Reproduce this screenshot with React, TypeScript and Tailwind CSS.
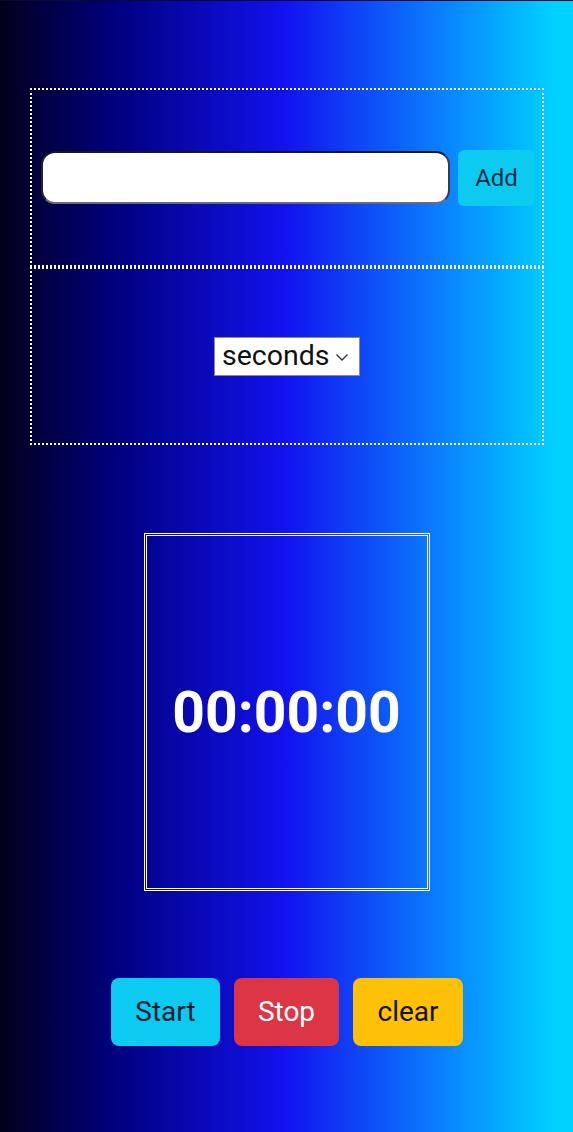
import React from "react";

export default function App() {
  return (
    <div
      className="min-h-[1132px] w-full bg-[linear-gradient(to_right,#02001c_0%,#00007e_20%,#1212f0_50%,#0a84ff_78%,#00d2ff_97%)] border-t border-[#0a0a30]"
      style={{ fontFamily: "Roboto, 'Noto Sans', sans-serif" }}
    >
      <div className="pt-[87px] pl-[30px] pr-[29px]">
        <div className="border-[2px] border-dotted border-white h-[179px] flex items-center gap-[8px] pl-[9px] pr-[7px]">
          <div className="h-[53px] flex-1 rounded-[14px] bg-white border-[2px] border-t-[#15152a] border-l-[#20203a] border-b-[#6a6a80] border-r-[#3a3a55]" />
          <button className="h-[56px] w-[77px] rounded-[6px] bg-[#0dcaf0] text-[#10304a] text-[24px]">
            Add
          </button>
        </div>
        <div className="border-[2px] border-dotted border-white h-[178px] flex items-center justify-center">
          <div className="h-[39px] w-[146px] bg-white border border-[#8a8a8a] flex items-center pl-[7px] gap-[5px]">
            <span className="text-[28.5px] text-[#111] leading-none">seconds</span>
            <svg width="14" height="9" viewBox="0 0 14 9" className="mt-[2px]">
              <path d="M1.5 1.5 L7 7 L12.5 1.5" fill="none" stroke="#333" strokeWidth="1.3" />
            </svg>
          </div>
        </div>
      </div>
      <div className="flex justify-center pt-[88px]">
        <div className="w-[286px] h-[358px] border-[3px] border-double border-white flex items-center justify-center">
          <span className="text-white font-bold text-[57px] leading-none">00:00:00</span>
        </div>
      </div>
      <div className="flex justify-center gap-[14px] pt-[87px] pl-[1px]">
        <button className="w-[109px] h-[68px] rounded-[8px] bg-[#0dcaf0] text-[#0c1c2c] text-[28px]">
          Start
        </button>
        <button className="w-[105px] h-[68px] rounded-[8px] bg-[#dc3545] text-white text-[28px]">
          Stop
        </button>
        <button className="w-[110px] h-[68px] rounded-[8px] bg-[#ffc107] text-[#111] text-[28px]">
          clear
        </button>
      </div>
    </div>
  );
}
